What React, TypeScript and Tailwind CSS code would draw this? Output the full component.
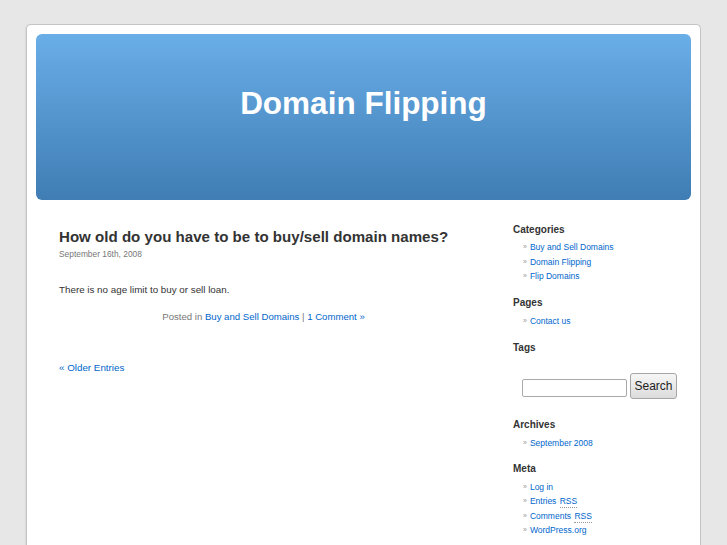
const FONT = { fontFamily: '"Liberation Sans", Arial, sans-serif' };

const categories = ["Buy and Sell Domains", "Domain Flipping", "Flip Domains"];

function Bullet({ children }: { children: React.ReactNode }) {
  return (
    <li className="flex items-center pl-[10px] text-[8.5px] leading-[14.5px]">
      <span className="mr-[3px] text-[7px] text-[#999]">»</span>
      <a href="#" className="text-[#0066cc]">
        {children}
      </a>
    </li>
  );
}

function Rss() {
  return (
    <abbr
      title="Really Simple Syndication"
      className="ml-[1px] no-underline border-b border-dotted border-[#999] pb-[1px] leading-[10px] cursor-help"
    >
      RSS
    </abbr>
  );
}

export default function App() {
  return (
    <div className="min-h-screen bg-[#e7e7e7] pl-[26px] pt-[24px]" style={FONT}>
      <div className="w-[675px] min-h-[521px] rounded-t-[5px] border border-b-0 border-[#c4c4c4] bg-white px-[9px] pt-[9px] shadow-[-1px_0_1px_rgba(0,0,0,0.06)]">
        <header className="flex h-[166px] justify-center rounded-[6px] bg-gradient-to-b from-[#6aaee8] to-[#3f7db4] pt-[51px]">
          <h1 className="text-[31.5px] font-bold leading-[36px] text-white">Domain Flipping</h1>
        </header>

        <div className="flex">
          <main className="w-[432px] pl-[23px]">
            <h2 className="mt-[28px] text-[15.1px] font-bold leading-[18px] text-[#333]">
              How old do you have to be to buy/sell domain names?
            </h2>
            <p className="mt-[3px] text-[8.4px] leading-[10px] text-[#777]">September 16th, 2008</p>
            <p className="mt-[25px] text-[9.8px] leading-[12px] text-[#333]">
              There is no age limit to buy or sell loan.
            </p>
            <p className="mt-[15px] text-center text-[9.6px] leading-[12px] text-[#777]">
              Posted in{" "}
              <a href="#" className="text-[#0066cc]">
                Buy and Sell Domains
              </a>{" "}
              |{" "}
              <a href="#" className="text-[#0066cc]">
                1 Comment »
              </a>
            </p>
            <p className="mt-[39px] text-[9.8px] leading-[12px]">
              <a href="#" className="text-[#0066cc]">
                « Older Entries
              </a>
            </p>
          </main>

          <aside className="ml-[45px] w-[170px]">
            <h3 className="mt-[24px] text-[10px] font-bold leading-[12px] text-[#333]">Categories</h3>
            <ul className="mt-[4px]">
              {categories.map((c) => (
                <Bullet key={c}>{c}</Bullet>
              ))}
            </ul>

            <h3 className="mt-[13px] text-[10px] font-bold leading-[12px] text-[#333]">Pages</h3>
            <ul className="mt-[5px]">
              <Bullet>Contact us</Bullet>
            </ul>

            <h3 className="mt-[14px] text-[10px] font-bold leading-[12px] text-[#333]">Tags</h3>

            <form className="mt-[19px] flex items-start pl-[9px]" onSubmit={(e) => e.preventDefault()}>
              <input
                type="text"
                className="mt-[6px] h-[18px] w-[105px] rounded-[2px] border border-[#a9a9a9] bg-white px-1 text-[10px] outline-none"
              />
              <button
                type="submit"
                className="ml-[3px] h-[26px] w-[47px] rounded-[3px] border border-[#a6a6a6] bg-gradient-to-b from-[#f6f6f6] to-[#dcdcdc] text-[12px] text-[#222]"
              >
                Search
              </button>
            </form>

            <h3 className="mt-[20px] text-[10px] font-bold leading-[12px] text-[#333]">Archives</h3>
            <ul className="mt-[5px]">
              <Bullet>September 2008</Bullet>
            </ul>

            <h3 className="mt-[12px] text-[10px] font-bold leading-[12px] text-[#333]">Meta</h3>
            <ul className="mt-[5px]">
              <Bullet>Log in</Bullet>
              <Bullet>
                Entries <Rss />
              </Bullet>
              <Bullet>
                Comments <Rss />
              </Bullet>
              <Bullet>WordPress.org</Bullet>
            </ul>
          </aside>
        </div>
      </div>
    </div>
  );
}
